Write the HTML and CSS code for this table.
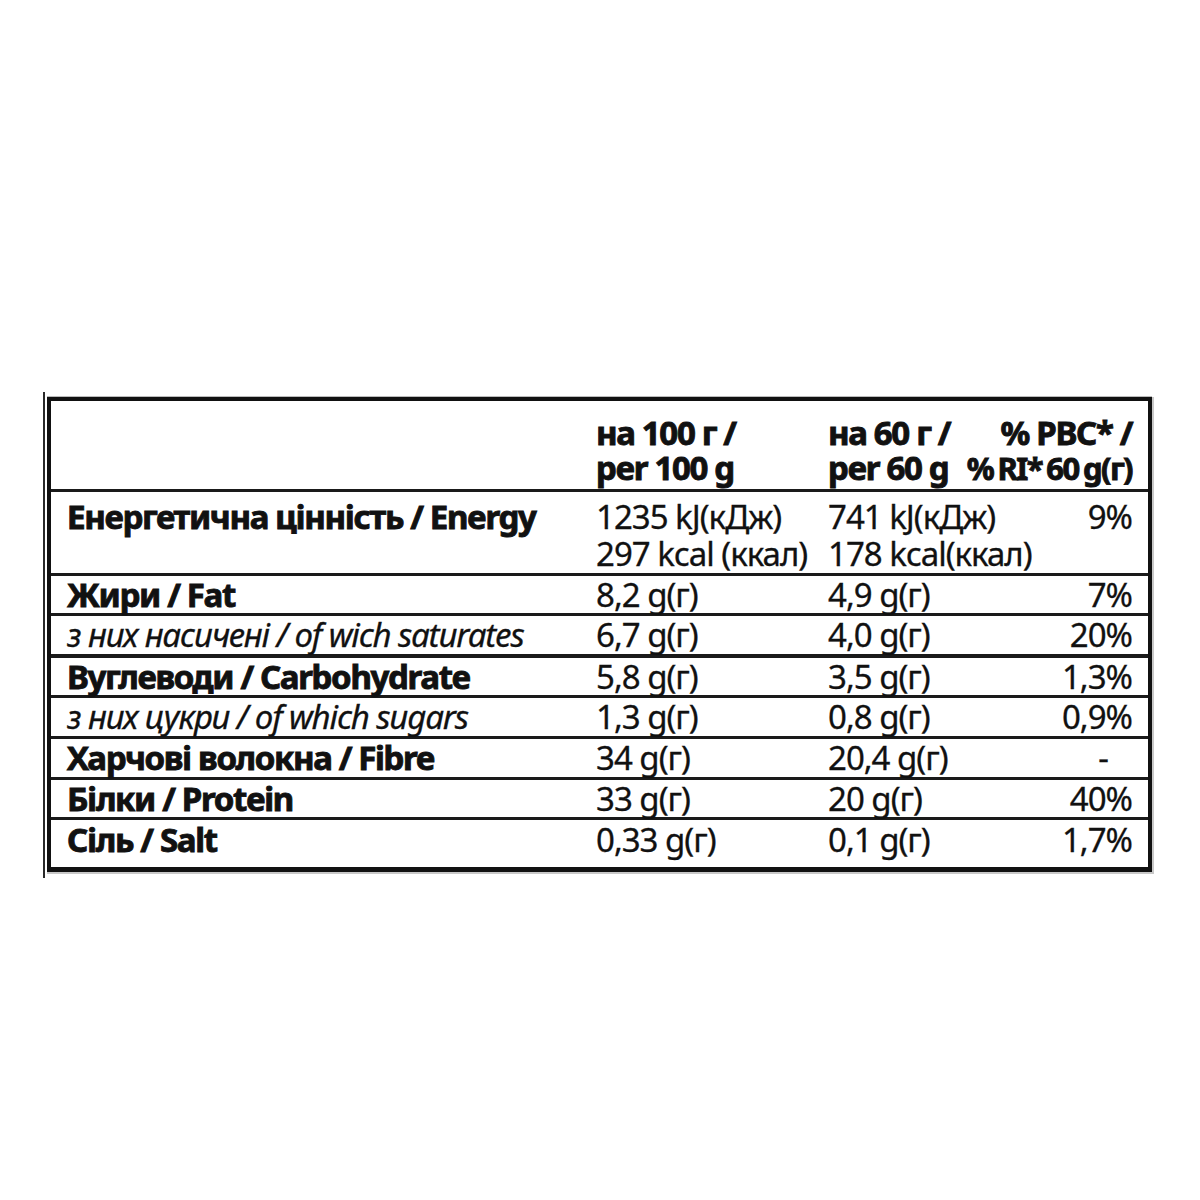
FILE: index.html
```html
<!DOCTYPE html>
<html lang="uk">
<head>
<meta charset="utf-8">
<title>Nutrition facts</title>
<link rel="stylesheet" href="styles.css">
</head>
<body>
<div class="page">
  <div class="frame">
    <div class="box">
      <div class="row head">
        <div class="c1"></div>
        <div class="c2 b">на 100 г /<br>per 100 g</div>
        <div class="c3 b">на 60 г /<br>per 60 g</div>
        <div class="c4 b">% РВС* /<br><span class="tight">% RI* 60 g(г)</span></div>
      </div>
      <div class="row energy">
        <div class="c1 b">Енергетична цінність / Energy</div>
        <div class="c2">1235 kJ(кДж)<br>297 kcal (ккал)</div>
        <div class="c3">741 kJ(кДж)<br>178 kcal(ккал)</div>
        <div class="c4">9%</div>
      </div>
      <div class="row h40">
        <div class="c1 b">Жири / Fat</div>
        <div class="c2">8,2 g(г)</div>
        <div class="c3">4,9 g(г)</div>
        <div class="c4">7%</div>
      </div>
      <div class="row h42 thick">
        <div class="c1 i">з них насичені / of wich saturates</div>
        <div class="c2">6,7 g(г)</div>
        <div class="c3">4,0 g(г)</div>
        <div class="c4">20%</div>
      </div>
      <div class="row h40">
        <div class="c1 b">Вуглеводи / Carbohydrate</div>
        <div class="c2">5,8 g(г)</div>
        <div class="c3">3,5 g(г)</div>
        <div class="c4">1,3%</div>
      </div>
      <div class="row h41">
        <div class="c1 i">з них цукри / of which sugars</div>
        <div class="c2">1,3 g(г)</div>
        <div class="c3">0,8 g(г)</div>
        <div class="c4">0,9%</div>
      </div>
      <div class="row h41">
        <div class="c1 b">Харчові волокна / Fibre</div>
        <div class="c2">34 g(г)</div>
        <div class="c3">20,4 g(г)</div>
        <div class="c4 dash">-</div>
      </div>
      <div class="row h40">
        <div class="c1 b">Білки / Protein</div>
        <div class="c2">33 g(г)</div>
        <div class="c3">20 g(г)</div>
        <div class="c4">40%</div>
      </div>
      <div class="row last">
        <div class="c1 b">Сіль / Salt</div>
        <div class="c2">0,33 g(г)</div>
        <div class="c3">0,1 g(г)</div>
        <div class="c4">1,7%</div>
      </div>
    </div>
  </div>
</div>
</body>
</html>
```

FILE: styles.css
```css
html, body {
  margin: 0;
  padding: 0;
  background: #ffffff;
}

.page {
  width: 1200px;
  height: 1200px;
  padding-top: 392px;
  padding-left: 43px;
  box-sizing: border-box;
}

.frame {
  width: 1109px;
  border-left: 2px solid #2a2a2a;
  padding: 5px 0 6px 2px;
  box-sizing: border-box;
}

.box {
  width: 1105px;
  border: 4px solid #111;
  border-bottom-width: 5px;
  box-shadow: 1px 1px 0 1px #c8c8c8, 0 -1px 0 0 #bbbbbb;
  box-sizing: border-box;
  font-family: "Noto Sans", "Open Sans", sans-serif;
  font-size: 33px;
  color: #111;
}

.row {
  display: grid;
  grid-template-columns: 529px 232px minmax(0, 1fr) 170px;
  padding: 0 16px 0 16px;
  border-bottom: 3px solid #1a1a1a;
  box-sizing: border-box;
  align-items: center;
  white-space: nowrap;
  line-height: 36px;
}

.row > div {
  letter-spacing: -1px;
  -webkit-text-stroke: 0.3px #111;
}

.c4 {
  text-align: right;
}

.row > .b {
  font-weight: 700;
  letter-spacing: -1.35px;
  -webkit-text-stroke: 0.9px #111;
}

.row > .i {
  font-style: italic;
  letter-spacing: -1.15px;
}

.tight {
  font-size: 31px;
  letter-spacing: -1.6px;
  word-spacing: -2px;
}

.head {
  height: 91px;
  align-items: start;
  padding-top: 14px;
  line-height: 35px;
}

.energy {
  height: 84px;
  align-items: start;
  padding-top: 6px;
  line-height: 37px;
}

.h40 { height: 40px; }
.h41 { height: 41px; }
.h42 { height: 42px; }

.thick {
  border-bottom-width: 4px;
}

.last {
  height: 47px;
  border-bottom: none;
  padding-bottom: 8px;
}

.dash {
  padding-right: 24px;
}
```
